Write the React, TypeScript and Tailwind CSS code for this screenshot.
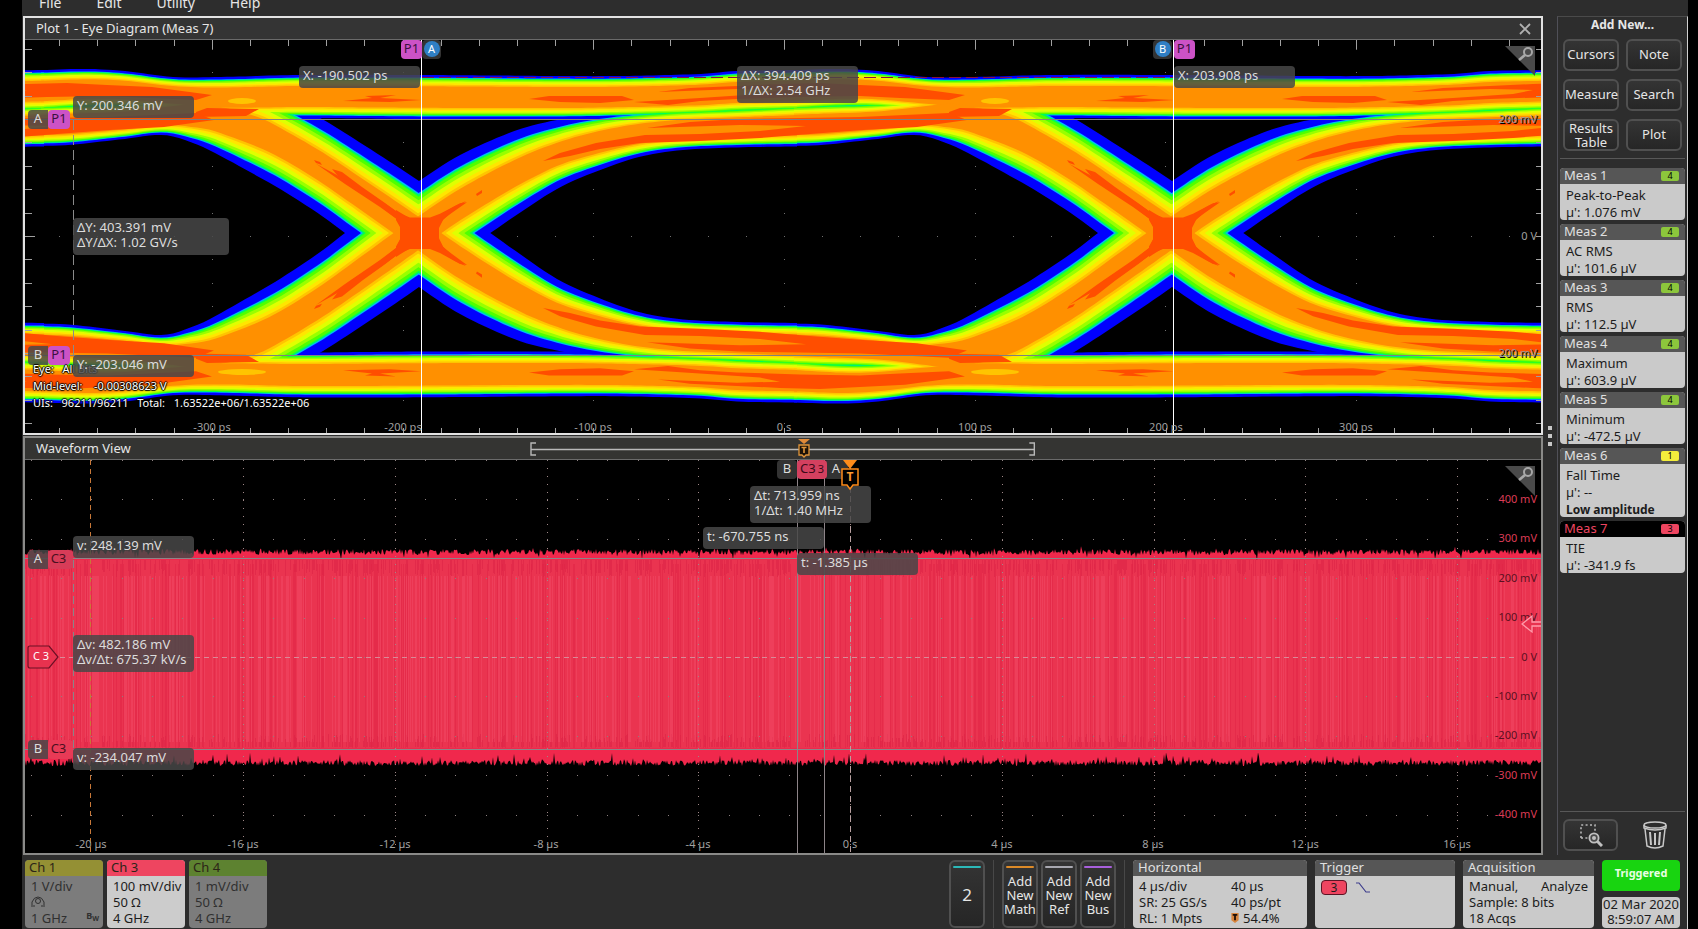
import { useState } from "react";
import type { ReactNode } from "react";
import clsx from "clsx";

type Point = { u: number; top: number; bot: number; s: number };

const PLOT_W = 1516;
const PLOT_H = 393;

const UI = 753;
const CROSSINGS = [-334, 419, 1172];
const MID = 233;

// flat/steep: how far each colour reaches from the band centre
const LEVELS = [
  { color: "#0000ff", flat: 1, steep: 1 },
  { color: "#00b4ff", flat: 0.88, steep: 0.77 },
  { color: "#00ff50", flat: 0.85, steep: 0.74 },
  { color: "#50ff00", flat: 0.81, steep: 0.7 },
  { color: "#98ff00", flat: 0.77, steep: 0.63 },
  { color: "#e0ff00", flat: 0.71, steep: 0.55 },
  { color: "#ffe600", flat: 0.63, steep: 0.46 },
  { color: "#ffc400", flat: 0.56, steep: 0.38 },
  { color: "#ff9000", flat: 0.49, steep: 0.32 },
];

const RAIL: Point[] = [
  { u: -378, top: 70, bot: 112, s: 0 },
  { u: -330, top: 69, bot: 109, s: 0 },
  { u: -295, top: 71, bot: 109, s: 0 },
  { u: -245, top: 77, bot: 113, s: 0 },
  { u: -200, top: 77, bot: 118, s: 0 },
  { u: -120, top: 75, bot: 118, s: 0 },
  { u: 0, top: 75, bot: 119, s: 0 },
  { u: 140, top: 76, bot: 119, s: 0 },
  { u: 200, top: 76, bot: 118, s: 0 },
  { u: 280, top: 74, bot: 116, s: 0 },
  { u: 318, top: 71, bot: 114, s: 0 },
  { u: 378, top: 70, bot: 112, s: 0 },
];

const FALL: Point[] = [
  { u: -378, top: 104, bot: 146, s: 0 },
  { u: -350, top: 103, bot: 145, s: 0 },
  { u: -295, top: 102, bot: 139, s: 0 },
  { u: -255, top: 97, bot: 135, s: 0.1 },
  { u: -226, top: 88, bot: 143, s: 0.4 },
  { u: -206, top: 84, bot: 152, s: 0.7 },
  { u: -160, top: 88, bot: 177, s: 0.9 },
  { u: -134, top: 99, bot: 192, s: 1 },
  { u: -97, top: 119, bot: 216, s: 1 },
  { u: -74, top: 133, bot: 233, s: 1 },
  { u: 0, top: 181, bot: 287, s: 1 },
  { u: 41, top: 211, bot: 314, s: 1 },
  { u: 98, top: 252, bot: 340, s: 1 },
  { u: 140, top: 280, bot: 351, s: 0.9 },
  { u: 180, top: 298, bot: 357, s: 0.6 },
  { u: 220, top: 312, bot: 360, s: 0.3 },
  { u: 260, top: 319, bot: 362, s: 0.1 },
  { u: 318, top: 322, bot: 364, s: 0 },
  { u: 378, top: 323, bot: 367, s: 0 },
];

const HOT: number[][] = [
  [529, 99, 549, 96, 622, 96, 634, 100, 600, 103, 560, 102],
  [
    658, 92, 690, 88, 737, 86, 780, 84, 820, 83, 860, 85, 905, 87, 965, 95, 949,
    100, 900, 98, 860, 96, 800, 97, 737, 99, 700, 101, 668, 105, 634, 102, 700,
    98, 760, 94, 780, 90, 737, 89,
  ],
  [960, 108, 1012, 109, 999, 116, 949, 117, 949, 112],
  [
    647, 128, 690, 122, 738, 119, 800, 118, 860, 117, 949, 113, 967, 120, 917,
    127, 863, 130, 810, 134, 760, 138, 700, 141, 640, 143, 600, 149, 570, 156,
    543, 161, 560, 153, 596, 143, 645, 135, 700, 134, 760, 131, 806, 126, 740,
    125, 680, 127,
  ],
  [343, 101, 372, 98, 365, 96, 396, 95, 380, 98, 421, 100, 390, 102],
  [332, 169, 342, 172, 362, 187, 385, 203, 404, 217, 398, 220, 376, 203, 352, 188, 337, 175],
  [
    396, 210, 411, 219, 430, 219, 440, 215, 455, 206, 466, 201, 450, 213, 443,
    220, 439, 228, 439, 240, 443, 247, 452, 254, 467, 265, 460, 264, 440, 253,
    430, 249, 410, 249, 400, 253, 376, 270, 350, 286, 316, 305, 345, 284, 380,
    260, 396, 248, 400, 240, 400, 227, 396, 220,
  ],
  [314, 160, 320, 162, 322, 165, 316, 163],
  [476, 194, 482, 190, 482, 193, 477, 196],
];

const flip = (y: number) => (y < MID ? MID + (MID - y) * 1.04 : MID - (y - MID) / 1.04);

function sample(points: Point[], u: number, key: "top" | "bot" | "s") {
  let i = 0;
  while (i < points.length - 2 && points[i + 1].u < u) i++;
  const slope = (k: number) => {
    const a = points[Math.max(0, k - 1)];
    const b = points[Math.min(points.length - 1, k + 1)];
    return (b[key] - a[key]) / (b.u - a.u);
  };
  const p = points[i];
  const q = points[i + 1];
  const h = q.u - p.u;
  const t = (u - p.u) / h;
  if (key === "s") return p.s + (q.s - p.s) * t;
  const t2 = t * t;
  const t3 = t2 * t;
  return (
    (2 * t3 - 3 * t2 + 1) * p[key] +
    (t3 - 2 * t2 + t) * h * slope(i) +
    (3 * t2 - 2 * t3) * q[key] +
    (t3 - t2) * h * slope(i + 1)
  );
}

function bandPath(points: Point[], x0: number, flat: number, steep: number, mirrored: boolean) {
  const upper: string[] = [];
  const lower: string[] = [];
  for (let u = -378; u <= 378; u += 6) {
    const top = sample(points, u, "top");
    const bot = sample(points, u, "bot");
    const s = sample(points, u, "s");
    const f = flat + (steep - flat) * s;
    const c = (top + bot) / 2;
    const half = ((bot - top) / 2) * f;
    const y1 = mirrored ? flip(c - half) : c - half;
    const y2 = mirrored ? flip(c + half) : c + half;
    upper.push(`${x0 + u} ${y1.toFixed(1)}`);
    lower.unshift(`${x0 + u} ${y2.toFixed(1)}`);
  }
  return `M${upper.join("L")}L${lower.join("L")}Z`;
}

const EYE_LAYERS = LEVELS.map((l) => ({
  color: l.color,
  d: CROSSINGS.flatMap((x) => [
    bandPath(RAIL, x, l.flat, l.steep, false),
    bandPath(FALL, x, l.flat, l.steep, false),
    bandPath(RAIL, x, l.flat, l.steep, true),
    bandPath(FALL, x, l.flat, l.steep, true),
  ]),
}));

const HOT_PATHS = [-UI, 0, UI].flatMap((dx) =>
  [false, true].flatMap((mirrored) =>
    HOT.map((poly) => {
      const pts: string[] = [];
      for (let i = 0; i < poly.length; i += 2) {
        const y = mirrored ? flip(poly[i + 1]) : poly[i + 1];
        pts.push(`${poly[i] + dx},${y.toFixed(1)}`);
      }
      return pts.join(" ");
    })
  )
);

function makeRandom(seed: number) {
  let s = seed;
  return () => {
    s = (s * 1664525 + 1013904223) % 4294967296;
    return s / 4294967296;
  };
}

const WAVE = (() => {
  const rnd = makeRandom(7);
  const top: string[] = [];
  const bottom: string[] = [];
  for (let x = 25; x <= 1541; x++) {
    const spike = rnd() > 0.9 ? (rnd() - 0.4) * 10 : 0;
    top.push(`${x} ${(549 + rnd() * 6 + spike).toFixed(1)}`);
    const spike2 = rnd() > 0.9 ? (rnd() - 0.8) * 10 : 0;
    bottom.unshift(`${x} ${(766 - rnd() * 6 + spike2).toFixed(1)}`);
  }
  let light = "";
  let dark = "";
  let edge = "";
  for (let x = 25; x < 1541; x++) {
    const r = rnd();
    if (r < 0.28) light += `M${x + 0.5} 576V742`;
    else if (r > 0.82) dark += `M${x + 0.5} 564V748`;
    if (rnd() > 0.6) edge += `M${x + 0.5} 560V${Math.round(569 + rnd() * 8)}M${x + 0.5} 747V${Math.round(742 - rnd() * 8)}`;
  }
  return { body: `M${top.join("L")}L${bottom.join("L")}Z`, light, dark, edge };
})();

const range = (from: number, to: number) => Array.from({ length: to - from + 1 }, (_, i) => from + i);

const at = (x: number, y: number) => ({
  left: `${(x / PLOT_W) * 100}%`,
  top: `${(y / PLOT_H) * 100}%`,
});

function Readout({ x, y, size = "w-[121px]", lines }: { x: number; y: number; size?: string; lines: string[] }) {
  return (
    <div
      className={clsx(
        "absolute rounded bg-[#484848]/85 px-1 pt-0.5 pb-[5px] text-[13px] leading-[15px] whitespace-pre text-[#dcdcdc]",
        size
      )}
      style={at(x, y)}
    >
      {lines.map((l) => (
        <div key={l}>{l}</div>
      ))}
    </div>
  );
}

function Tag({ x, y, className, children }: { x: number; y: number; className: string; children: ReactNode }) {
  return (
    <div
      className={clsx("absolute flex h-[19px] items-center justify-center pb-0.5 text-[13px] leading-none", className)}
      style={at(x, y)}
    >
      {children}
    </div>
  );
}

function AxisLabel({ x, y, className = "text-[#a0a0a0]", children }: { x: number; y: number; className?: string; children: ReactNode }) {
  return (
    <span
      className={clsx("absolute -translate-x-1/2 -translate-y-1/2 text-[11px] leading-3 whitespace-nowrap", className)}
      style={at(x, y)}
    >
      {children}
    </span>
  );
}

function SideLabel({ y, className, children }: { y: number; className: string; children: ReactNode }) {
  return (
    <span
      className={clsx("absolute right-1 -translate-y-1/2 text-[11px] leading-3 whitespace-nowrap", className)}
      style={{ top: `${(y / PLOT_H) * 100}%` }}
    >
      {children}
    </span>
  );
}

function ZoomCorner() {
  return (
    <button aria-label="Zoom" className="absolute top-1.5 right-1.5 h-[30px] w-[30px]">
      <svg viewBox="0 0 30 30" className="h-full w-full">
        <path d="M0 0H30V30Z" fill="#4a4a4a" />
        <circle cx="23" cy="6" r="4" fill="none" stroke="#a8a8a8" strokeWidth="2" />
        <path d="M20 9L14 14" stroke="#a8a8a8" strokeWidth="2.6" />
      </svg>
    </button>
  );
}

function EyePlot() {
  const minorX = range(-19, 19).map((i) => Math.round(784 + i * 38.15));
  const minorY = range(-8, 8).map((i) => Math.round(236 + i * 23.4));
  const majorX = range(-3, 3).map((i) => Math.round(784 + i * 190.7));

  return (
    <div className="relative flex-1 overflow-hidden bg-black">
      <svg viewBox="25 40 1516 393" preserveAspectRatio="none" className="absolute inset-0 h-full w-full">
        <g fill="#6f6f6f">
          {minorX.map((x) => (
            <rect key={x} x={x} y="236" width="1" height="1" />
          ))}
          {majorX.map((x) => minorY.map((y) => <rect key={`${x}-${y}`} x={x} y={y} width="1" height="1" />))}
        </g>
        {EYE_LAYERS.map((layer) => (
          <g key={layer.color} fill={layer.color}>
            {layer.d.map((d, i) => (
              <path key={i} d={d} />
            ))}
          </g>
        ))}
        <g fill="#ff4e00">
          {HOT_PATHS.map((p, i) => (
            <polygon key={i} points={p} />
          ))}
        </g>
        <g fill="#ffc400">
          {[242, 995].map((x) => (
            <g key={x}>
              <ellipse cx={x} cy="101" rx="14" ry="3" />
              <ellipse cx={x} cy="372" rx="24" ry="3" />
            </g>
          ))}
        </g>
        <g stroke="#a0a0a0">
          {minorX.map((x, i) => (
            <path key={x} d={`M${x + 0.5} 40v${(i + 1) % 5 === 0 ? 9 : 6}M${x + 0.5} 433v-5`} />
          ))}
          {minorY.map((y, i) => {
            const len = (i + 2) % 5 === 0 ? 10 : 7;
            return <path key={y} d={`M25 ${y + 0.5}h${len}M1541 ${y + 0.5}h-5`} />;
          })}
        </g>
        <path d="M25 119.5H1541M25 355.5H1541" stroke="#808080" />
        <path d="M73.5 120V355" stroke="#8a8a8a" strokeDasharray="10 5" />
        <path d="M422 77.5H1173" stroke="#8a1040" strokeDasharray="12 5" />
        <path d="M421.5 40V433M1173.5 40V433" stroke="#ffffff" />
      </svg>

      <Tag x={3} y={70} className="w-5 rounded-l bg-[#4a4a4a]/85 text-[#dcdcdc]">A</Tag>
      <Tag x={23} y={70} className="w-[22px] rounded bg-[#cc52c6] text-[#3a1040]">P1</Tag>
      <Tag x={3} y={306} className="w-5 rounded-l bg-[#4a4a4a]/85 text-[#dcdcdc]">B</Tag>
      <Tag x={23} y={306} className="w-[22px] rounded bg-[#cc52c6] text-[#3a1040]">P1</Tag>

      <Tag x={376} y={0} className="w-[21px] rounded bg-[#cc52c6] text-[#3a1040]">P1</Tag>
      <Tag x={397} y={0} className="w-[19px] rounded bg-[#333333]">
        <span className="flex h-4 w-4 items-center justify-center rounded-full bg-[#2f7fc4] text-[11px] text-white">A</span>
      </Tag>
      <Tag x={1128} y={0} className="w-[19px] rounded bg-[#333333]">
        <span className="flex h-4 w-4 items-center justify-center rounded-full bg-[#2f7fc4] text-[11px] text-white">B</span>
      </Tag>
      <Tag x={1149} y={0} className="w-[21px] rounded bg-[#cc52c6] text-[#3a1040]">P1</Tag>

      <div
        className="absolute text-[11px] leading-[17px] whitespace-pre text-white [text-shadow:1px_0_1px_#000,-1px_0_1px_#000,0_1px_1px_#000,0_-1px_1px_#000]"
        style={at(8, 320)}
      >
        <div>Eye:   All Bits</div>
        <div>Mid-level:    -0.00308623 V</div>
        <div>UIs:   96211/96211   Total:   1.63522e+06/1.63522e+06</div>
      </div>

      <Readout x={274} y={26} lines={["X: -190.502 ps"]} />
      <Readout x={712} y={26} lines={["ΔX: 394.409 ps", "1/ΔX: 2.54 GHz"]} />
      <Readout x={1149} y={26} lines={["X: 203.908 ps"]} />
      <Readout x={48} y={56} lines={["Y: 200.346 mV"]} />
      <Readout x={48} y={178} size="w-[156px]" lines={["ΔY: 403.391 mV", "ΔY/ΔX: 1.02 GV/s"]} />
      <Readout x={48} y={315} lines={["Y: -203.046 mV"]} />

      <SideLabel y={79} className="text-[#9a9a9a] [text-shadow:1px_1px_0_#000]">200 mV</SideLabel>
      <SideLabel y={196} className="text-[#a0a0a0]">0 V</SideLabel>
      <SideLabel y={313} className="text-[#9a9a9a] [text-shadow:1px_1px_0_#000]">200 mV</SideLabel>

      {["-300 ps", "-200 ps", "-100 ps", "0 s", "100 ps", "200 ps", "300 ps"].map((label, i) => (
        <AxisLabel key={label} x={Math.round(187 + i * 190.7)} y={387}>
          {label}
        </AxisLabel>
      ))}
      <ZoomCorner />
    </div>
  );
}

function WaveformPlot() {
  const minorX = range(-27, 21).map((i) => Math.round(850 + i * 30.35));
  const majorX = range(-5, 4).map((i) => Math.round(850 + i * 151.75));
  const rows = range(-4, 4).map((i) => Math.round(657 + i * 39.4));

  return (
    <div className="relative flex-1 overflow-hidden bg-black">
      <svg viewBox="25 460 1516 393" preserveAspectRatio="none" className="absolute inset-0 h-full w-full">
        <path d={WAVE.body} fill="#f0284c" />
        <rect x="25" y="560" width="1516" height="188" fill="#ea3450" />
        <path d={WAVE.edge} stroke="#dd2246" opacity="0.55" />
        <path d={WAVE.dark} stroke="#e12445" opacity="0.5" />
        <path d={WAVE.light} stroke="#f24a66" opacity="0.5" />
        <g fill="#8c8080">
          {minorX.map((x) => (
            <g key={x}>
              <rect x={x} y="460" width="1" height="1" />
              {rows.map((y) => (
                <rect key={y} x={x} y={y} width="1" height="1" />
              ))}
            </g>
          ))}
        </g>
        {majorX.slice(1).map((x) => (
          <path key={x} d={`M${x + 0.5} 468V845`} stroke="#a08888" strokeDasharray="1 7" />
        ))}
        <path d="M25 558.5H1541M25 749.5H1541" stroke="#8d8488" strokeWidth="1" />
        <path d="M60 657.5H1514" stroke="#d98a98" strokeDasharray="5 4" />
        <path d="M90.5 460V853" stroke="#c87838" strokeDasharray="5 4" />
        <path d="M73.5 560V749" stroke="#8a8488" strokeDasharray="8 4" />
        <path d="M850.5 486V853" stroke="#b8a0a0" strokeDasharray="6 4" />
        <path d="M797.5 460V853M824.5 460V853" stroke="#8d8488" strokeWidth="1" />
      </svg>

      <Tag x={3} y={90} className="w-5 rounded-l bg-[#484848]/85 text-[#dcdcdc]">A</Tag>
      <Tag x={23} y={90} className="w-[25px] rounded bg-[#d83c58] pr-1 text-[#4a1020]">C3</Tag>
      <Tag x={3} y={280} className="w-5 rounded-l bg-[#484848]/85 text-[#dcdcdc]">B</Tag>
      <Tag x={23} y={280} className="w-[25px] rounded bg-[#e83a56] pr-1 text-[#4a1020]">C3</Tag>

      <Tag x={752} y={0} className="w-5 rounded bg-[#333333] text-[#dcdcdc]">B</Tag>
      <Tag x={799} y={0} className="w-6 rounded bg-[#333333] text-[#dcdcdc]">A</Tag>
      <Tag x={772} y={0} className="w-[30px] rounded bg-[#d4405f] text-[#3c0a18]">
        C3<span className="pl-0.5 text-[11px]">3</span>
      </Tag>

      <Readout x={725} y={26} lines={["Δt: 713.959 ns", "1/Δt: 1.40 MHz"]} />
      <Readout x={678} y={67} lines={["t: -670.755 ns"]} />
      <Readout x={772} y={93} lines={["t: -1.385 µs"]} />
      <Readout x={48} y={76} lines={["v: 248.139 mV"]} />
      <Readout x={48} y={175} lines={["Δv: 482.186 mV", "Δv/Δt: 675.37 kV/s"]} />
      <Readout x={48} y={288} lines={["v: -234.047 mV"]} />

      {/* trigger position */}
      <div className="absolute h-8 w-[18px]" style={at(816, 0)}>
        <svg viewBox="0 0 18 32" className="absolute inset-0 h-full w-full">
          <path d="M2 0H16L9 9Z" fill="#ff8c1a" />
          <path d="M1 9H17V25H12L9 29L6 25H1Z" fill="#000" stroke="#ff8c1a" strokeWidth="1.5" />
        </svg>
        <span className="relative block pt-[11px] text-center text-[12px] leading-3 font-bold text-[#ff9a30]">T</span>
      </div>

      <div className="absolute h-6 w-8 text-white" style={at(2, 185)}>
        <svg viewBox="0 0 32 24" className="absolute inset-0 h-full w-full">
          <path d="M3 1H22L31 12L22 23H3Q1 23 1 21V3Q1 1 3 1Z" fill="#e8324f" stroke="#6a1024" strokeWidth="1.2" />
        </svg>
        <span className="relative block pr-1 text-center text-[11px] leading-[22px]">C 3</span>
      </div>

      <SideLabel y={39} className="text-[#dc3c56]">400 mV</SideLabel>
      <SideLabel y={78} className="text-[#dc3c56]">300 mV</SideLabel>
      <SideLabel y={118} className="text-[#5a1020]">200 mV</SideLabel>
      <SideLabel y={157} className="text-[#5a1020]">100 mV</SideLabel>
      <SideLabel y={197} className="text-[#5a1020]">0 V</SideLabel>
      <SideLabel y={236} className="text-[#5a1020]">-100 mV</SideLabel>
      <SideLabel y={275} className="text-[#5a1020]">-200 mV</SideLabel>
      <SideLabel y={315} className="text-[#dc3c56]">-300 mV</SideLabel>
      <SideLabel y={354} className="text-[#dc3c56]">-400 mV</SideLabel>

      <svg viewBox="0 0 20 20" className="absolute right-0 h-5 w-5" style={{ top: `${(154 / PLOT_H) * 100}%` }}>
        <path d="M20 8H11V2L1 10L11 18V12H20" fill="#e8324f" stroke="#ff9aaa" strokeWidth="1.3" />
      </svg>

      {["-20 µs", "-16 µs", "-12 µs", "-8 µs", "-4 µs", "0 s", "4 µs", "8 µs", "12 µs", "16 µs"].map((label, i) => (
        <AxisLabel key={label} x={Math.round(66 + i * 151.75)} y={384}>
          {label}
        </AxisLabel>
      ))}
      <ZoomCorner />
    </div>
  );
}

const measurements = [
  { id: 1, name: "Peak-to-Peak", value: "1.076 mV", source: 4 },
  { id: 2, name: "AC RMS", value: "101.6 µV", source: 4 },
  { id: 3, name: "RMS", value: "112.5 µV", source: 4 },
  { id: 4, name: "Maximum", value: "603.9 µV", source: 4 },
  { id: 5, name: "Minimum", value: "-472.5 µV", source: 4 },
  { id: 6, name: "Fall Time", value: "--", source: 1, note: "Low amplitude" },
  { id: 7, name: "TIE", value: "-341.9 fs", source: 3 },
];

const sourceColor: Record<number, string> = {
  1: "bg-[#f4ee3c]",
  3: "bg-[#ee4560]",
  4: "bg-[#8cc63c]",
};

const darkButton =
  "rounded-md border-2 border-[#505050] bg-linear-to-b from-[#343434] to-[#262626] text-[13px] text-[#e6e6e6]";

function Sidebar({ selected, onSelect }: { selected: number; onSelect: (id: number) => void }) {
  return (
    <aside className="flex w-[131px] flex-col border-t border-r border-l border-t-[#4a4a4a] border-r-[#d0d0d0] border-l-[#505058]">
      <h2 className="text-center text-[12px] leading-4 font-bold text-[#e6e6e6]">Add New...</h2>
      <div className="mx-[5px] mt-1.5 grid grid-cols-2 gap-x-[7px] gap-y-2">
        {["Cursors", "Note", "Measure", "Search", "Results Table", "Plot"].map((label) => (
          <button key={label} className={clsx(darkButton, "h-8 pb-0.5 leading-3.5")}>
            {label}
          </button>
        ))}
      </div>
      <hr className="mx-0.5 mt-[7px] border-[#585858]" />

      <div className="mx-0.5 mt-[9px] flex flex-col gap-1">
        {measurements.map((m) => (
          <button
            key={m.id}
            onClick={() => onSelect(m.id)}
            className="overflow-hidden rounded bg-[#cacaca] text-left text-[13px] text-[#1c1c1c]"
          >
            <span
              className={clsx(
                "flex h-4 items-center justify-between pr-1.5 pl-1 leading-[14px]",
                m.id === selected ? "bg-black text-[#ee4560]" : "bg-[#565656] text-[#e0e0e0]"
              )}
            >
              <span className="pb-0.5">Meas {m.id}</span>
              <span
                className={clsx(
                  "flex h-2.5 w-[18px] items-center justify-center rounded-xs text-[9px] text-black",
                  sourceColor[m.source]
                )}
              >
                {m.source}
              </span>
            </span>
            <span className="-mb-px block pt-[3px] pl-1.5 leading-[17px]">
              <span className="block">{m.name}</span>
              <span className="block">µ': {m.value}</span>
              {m.note && <span className="block text-[12px] leading-[17px] font-bold">{m.note}</span>}
            </span>
          </button>
        ))}
      </div>

      <div className="mx-0.5 mt-auto flex items-center justify-between border-t border-[#585858] pt-[7px] pr-[18px] pb-1 pl-[3px]">
        <button aria-label="Draw a box" className={clsx(darkButton, "flex h-8 w-[55px] items-center justify-center")}>
          <svg viewBox="0 0 24 24" className="h-6 w-6">
            <path d="M2 15V2H16V9M2 15H9" fill="none" stroke="#b8b8b8" strokeWidth="1.6" strokeDasharray="2 2.4" />
            <circle cx="15" cy="15" r="4.6" fill="#4a4a4a" stroke="#c0c0c0" strokeWidth="1.8" />
            <circle cx="15" cy="15" r="2" fill="#c0c0c0" />
            <path d="M18.5 18.5L23 23" stroke="#c0c0c0" strokeWidth="3" />
          </svg>
        </button>
        <button aria-label="Delete" className="h-7 w-6">
          <svg viewBox="0 0 24 28" className="h-full w-full" fill="none" stroke="#c8c8c8" strokeWidth="1.5">
            <ellipse cx="12" cy="4" rx="11" ry="3" />
            <path d="M1 4V7Q12 11 23 7V4" />
            <path d="M2 8L4 25Q12 29 20 25L22 8" />
            <path d="M7 11L8 24M12 12V24M17 11L16 24" strokeWidth="2" />
          </svg>
        </button>
      </div>
    </aside>
  );
}

function ChannelBadge({ name, color, active, children }: { name: string; color: string; active?: boolean; children: ReactNode }) {
  return (
    <button
      className={clsx(
        "w-[78px] overflow-hidden rounded text-left text-[13px]",
        active ? "bg-[#cccccc] text-[#1c1c1c]" : "bg-[#7c7c7c] text-[#303030]"
      )}
    >
      <span className={clsx("block h-4 pl-1 leading-[14px] text-[#2c2418]", color)}>{name}</span>
      <span className="block h-[52px] pt-0.5 pl-1.5 leading-4 whitespace-nowrap">{children}</span>
    </button>
  );
}

function AddButton({ accent, children }: { accent: string; children: ReactNode }) {
  return (
    <button className={clsx(darkButton, "flex w-9 flex-col items-center pb-1 leading-3.5")}>
      <span className={clsx("mt-1 h-0.5 w-7 rounded-full", accent)} />
      <span className="flex flex-1 items-center text-center">{children}</span>
    </button>
  );
}

function InfoPanel({ title, className, children }: { title: string; className: string; children: ReactNode }) {
  return (
    <section className={clsx("overflow-hidden rounded bg-[#cacaca] text-[13px] text-[#1c1c1c]", className)}>
      <h3 className="h-4 bg-[#565656] pl-[5px] leading-[14px] text-[#e0e0e0]">{title}</h3>
      <div className="h-[52px] px-1.5 pt-0.5 leading-4">{children}</div>
    </section>
  );
}

export default function App() {
  const [selected, setSelected] = useState(7);

  return (
    <div className="min-h-screen bg-black pr-2.5 pl-[22px] font-['Noto_Sans',sans-serif]">
      <div className="flex min-h-screen flex-col bg-[#2d2d2d]">
        <nav className="flex h-4 gap-[35px] overflow-hidden pl-[17px] text-[14px] leading-4 text-[#e6e6e6]">
          {["File", "Edit", "Utility", "Help"].map((m) => (
            <button key={m} className="-mt-[5px] h-4">
              {m}
            </button>
          ))}
        </nav>

        <div className="flex flex-1">
          <main className="ml-px flex flex-1 flex-col gap-px">
            <section className="flex flex-1 flex-col border-2 border-[#e2e2e2]">
              <header className="flex h-[22px] items-center justify-between border-b border-[#6a6a6a] bg-[#343434] pr-2.5 pl-[11px]">
                <h1 className="pb-px text-[13px] leading-4 text-[#e6e6e6]">Plot 1 - Eye Diagram (Meas 7)</h1>
                <button aria-label="Close plot" className="h-3 w-3">
                  <svg viewBox="0 0 12 12" className="h-full w-full">
                    <path d="M1 1L11 11M11 1L1 11" stroke="#b0b0b0" strokeWidth="1.8" />
                  </svg>
                </button>
              </header>
              <EyePlot />
            </section>

            <section className="flex flex-1 flex-col border-2 border-[#8a8a88]">
              <header className="relative flex h-[22px] items-center border-b border-[#6a6a6a] bg-[#343432] pl-[11px]">
                <h1 className="pb-px text-[13px] leading-4 text-[#e6e6e6]">Waveform View</h1>
                <div className="absolute top-1 left-1/3 h-3.5 w-1/3">
                  <svg viewBox="0 0 505 14" preserveAspectRatio="none" className="h-full w-full">
                    <path d="M6 1H1V13H6M1 7.5H504M499 1H504V13H499" fill="none" stroke="#b8b8b8" strokeWidth="1.4" />
                  </svg>
                  <svg viewBox="0 0 12 20" className="absolute -top-1 left-[53%] h-5 w-3">
                    <path d="M0 1H12L6 6Z" fill="#e08a38" />
                    <path d="M1 7H11V17H8L6 19L4 17H1Z" fill="#1a1208" stroke="#e0953a" strokeWidth="1.3" />
                    <path d="M3.5 9.5H8.5M6 9.5V15" stroke="#e0953a" strokeWidth="1.6" />
                  </svg>
                </div>
              </header>
              <WaveformPlot />
            </section>
          </main>

          <div className="flex w-3.5 flex-col items-center justify-center gap-1">
            <span className="h-1 w-1 bg-[#c8c8c8]" />
            <span className="h-1 w-1 bg-[#c8c8c8]" />
            <span className="h-1 w-1 bg-[#c8c8c8]" />
          </div>

          <Sidebar selected={selected} onSelect={setSelected} />
        </div>

        <footer className="flex items-stretch border-r border-[#d0d0d0] pt-[5px] pr-[7px] pb-px pl-[3px]">
          <div className="flex gap-1">
            <ChannelBadge name="Ch 1" color="bg-[#949034]">
              <span className="block">1 V/div</span>
              <svg viewBox="0 0 14 12" className="my-0.5 h-3 w-3.5" fill="none" stroke="#303030" strokeWidth="1">
                <path d="M1 11V6Q3 1 7 1Q11 1 13 6V11M2 10H4M10 10H12" />
                <circle cx="7" cy="5" r="2.5" />
              </svg>
              <span className="flex justify-between pr-1">
                1 GHz
                <span className="text-[9px] leading-3 font-bold">
                  B<sub className="text-[7px]">W</sub>
                </span>
              </span>
            </ChannelBadge>
            <ChannelBadge name="Ch 3" color="bg-[#ee4560]" active>
              <span className="block">100 mV/div</span>
              <span className="block">50 Ω</span>
              <span className="block">4 GHz</span>
            </ChannelBadge>
            <ChannelBadge name="Ch 4" color="bg-[#5d8230]">
              <span className="block">1 mV/div</span>
              <span className="block">50 Ω</span>
              <span className="block">4 GHz</span>
            </ChannelBadge>
          </div>

          <div className="ml-auto flex gap-2">
            <AddButton accent="bg-[#2cb8b8]">
              <span className="text-[17px]">2</span>
            </AddButton>
            <span className="w-px bg-[#484848]" />
            <div className="flex gap-[3px]">
              <AddButton accent="bg-[#dc8a28]">Add New Math</AddButton>
              <AddButton accent="bg-[#a8a8b0]">Add New Ref</AddButton>
              <AddButton accent="bg-[#a860dc]">Add New Bus</AddButton>
            </div>
            <span className="w-px bg-[#484848]" />
            <InfoPanel title="Horizontal" className="w-[174px]">
              <div className="grid grid-cols-[92px_1fr] whitespace-nowrap">
                <span>4 µs/div</span>
                <span>40 µs</span>
                <span>SR: 25 GS/s</span>
                <span>40 ps/pt</span>
                <span>RL: 1 Mpts</span>
                <span className="flex items-center gap-1">
                  <svg viewBox="0 0 8 11" className="h-2.5 w-2">
                    <path d="M0 0H8V8L4 11L0 8Z" fill="#d8843c" />
                    <path d="M1.5 2H6.5M4 2V8" stroke="#201008" strokeWidth="2" />
                  </svg>
                  54.4%
                </span>
              </div>
            </InfoPanel>
            <InfoPanel title="Trigger" className="w-[140px]">
              <div className="flex items-center gap-2 pt-0.5">
                <span className="flex h-[15px] w-[26px] items-center justify-center rounded border border-[#5a1424] bg-[#ee4560] text-[12px]">
                  3
                </span>
                <svg viewBox="0 0 16 12" className="h-3 w-4">
                  <path d="M1 1H4L11 10H15" fill="none" stroke="#3c3c8c" strokeWidth="1.2" />
                </svg>
              </div>
            </InfoPanel>
            <InfoPanel title="Acquisition" className="w-[131px]">
              <div className="flex justify-between">
                <span>Manual,</span>
                <span>Analyze</span>
              </div>
              <div>Sample: 8 bits</div>
              <div>18 Acqs</div>
            </InfoPanel>
            <div className="flex w-[78px] flex-col justify-between">
              <button className="h-[31px] rounded bg-[#18d410] pb-1 text-[11px] font-bold text-[#e8ffe4]">Triggered</button>
              <div className="h-[31px] rounded bg-[#cacaca] text-center text-[13px] leading-[15px] whitespace-nowrap text-[#1c1c1c]">
                02 Mar 2020
                <br />
                8:59:07 AM
              </div>
            </div>
          </div>
        </footer>
      </div>
    </div>
  );
}
